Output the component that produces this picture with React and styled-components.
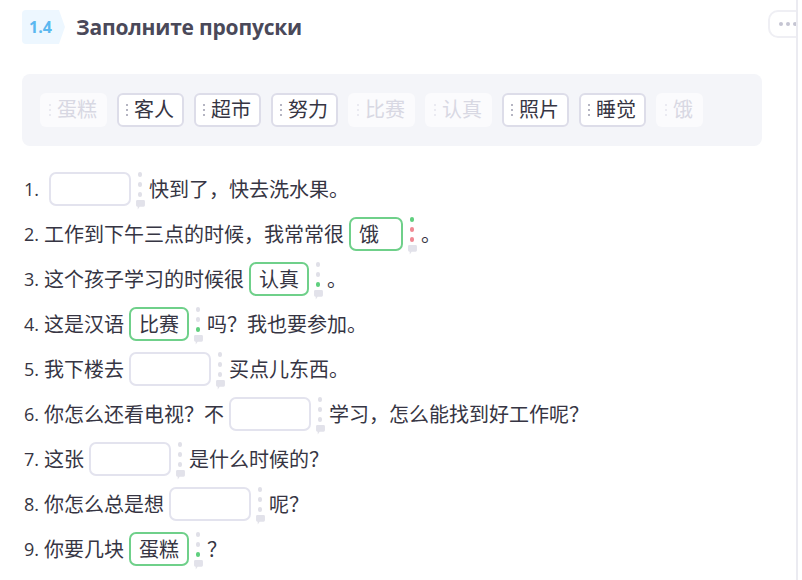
import React from "react";
import styled, { createGlobalStyle } from "styled-components";

const GlobalStyle = createGlobalStyle`
  html, body {
    margin: 0;
    padding: 0;
    background: #ffffff;
  }
  body {
    font-family: "Open Sans", "Noto Sans CJK SC", sans-serif;
    color: #363543;
  }
`;

const Page = styled.div`
  width: 802px;
  height: 580px;
  display: flex;
  overflow: hidden;
`;

const Main = styled.div`
  width: 798px;
  height: 100%;
  border-right: 2px solid #ebebf1;
  overflow: hidden;
  box-sizing: border-box;
  padding-left: 22px;
`;

const Header = styled.div`
  display: flex;
  align-items: center;
  height: 34px;
  margin-top: 10px;
`;

const Badge = styled.div`
  width: 43px;
  height: 34px;
  display: flex;
  align-items: center;
  padding-left: 7px;
  box-sizing: border-box;
  background: #edf7ff;
  color: #5ab8f0;
  font-size: 16px;
  font-weight: 700;
  border-radius: 4px 0 0 4px;
  clip-path: polygon(0 0, 86% 0, 100% 50%, 86% 100%, 0 100%);
`;

const Title = styled.h1`
  margin: 0 0 0 11px;
  font-size: 21px;
  font-weight: 700;
  color: #4a4959;
  letter-spacing: -0.2px;
  flex: 1;
`;

const MoreButton = styled.div`
  width: 40px;
  height: 28px;
  margin-right: -12px;
  margin-top: -6px;
  border: 2px solid #efeff4;
  border-radius: 10px;
  box-sizing: border-box;
  display: flex;
  align-items: center;
  gap: 3px;
  padding-left: 9px;
`;

const MoreDot = styled.span`
  width: 4px;
  height: 4px;
  border-radius: 50%;
  background: #c5c5d2;
`;

const WordBank = styled.div`
  width: 740px;
  margin-top: 30px;
  box-sizing: border-box;
  padding: 19px 18px;
  background: #f4f5f9;
  border-radius: 8px;
  display: flex;
  gap: 10px;
`;

const Chip = styled.div`
  height: 34px;
  box-sizing: border-box;
  display: flex;
  align-items: center;
  gap: 6px;
  padding: 0 8px 0 7px;
  border: 2px solid ${(p) => (p.$used ? "transparent" : "#dddde9")};
  border-radius: 6px;
  background: ${(p) => (p.$used ? "#fbfbfd" : "#ffffff")};
  color: ${(p) => (p.$used ? "#d8d8e3" : "#363543")};
  font-size: 20px;
  line-height: 1;
`;

const Grip = styled.span`
  display: flex;
  flex-direction: column;
  gap: 3px;

  i {
    width: 2px;
    height: 2px;
    border-radius: 1px;
    background: ${(p) => (p.$used ? "#e4e4ec" : "#9c9cae")};
  }
`;

const List = styled.div`
  margin-top: 20px;
  padding-left: 2px;
`;

const Row = styled.div`
  height: 45px;
  display: flex;
  align-items: center;
  font-size: 20px;
  white-space: nowrap;
`;

const Num = styled.span`
  font-size: 18px;
  margin-right: 5px;
`;

const Blank = styled.span`
  height: 34px;
  box-sizing: border-box;
  margin-left: 5px;
  display: inline-flex;
  align-items: center;
  padding: 0 8px;
  min-width: ${(p) => (p.$word ? "54px" : "82px")};
  border: 2px solid ${(p) => (p.$word ? "#6fd08a" : "#e3e3ee")};
  border-radius: 7px;
  font-size: 20px;
`;

const Marks = styled.span`
  display: flex;
  flex-direction: column;
  align-items: center;
  gap: 5px;
  margin: 4px 7px 0 7px;
  width: 4px;
`;

const Mark = styled.i`
  width: 4px;
  height: 5px;
  border-radius: 2px;
  background: ${(p) =>
    p.$state === "ok" ? "#5fcf7e" : p.$state === "bad" ? "#f08893" : "#e0e0e8"};
`;

const Bubble = () => (
  <svg width="9" height="10" viewBox="0 0 8 9" style={{ marginTop: -2 }}>
    <path
      d="M1.2 0h5.6A1.2 1.2 0 0 1 8 1.2v3.6A1.2 1.2 0 0 1 6.8 6H3.2L1.5 8.6V6h-.3A1.2 1.2 0 0 1 0 4.8V1.2A1.2 1.2 0 0 1 1.2 0z"
      fill="#e2e2ea"
    />
  </svg>
);

const words = [
  { w: "蛋糕", used: true },
  { w: "客人" },
  { w: "超市" },
  { w: "努力" },
  { w: "比赛", used: true },
  { w: "认真", used: true },
  { w: "照片" },
  { w: "睡觉" },
  { w: "饿", used: true },
];

const G = ["", "", ""];

const rows = [
  { before: "", word: null, after: "快到了，快去洗水果。", marks: G },
  { before: "工作到下午三点的时候，我常常很", word: "饿", after: "。", marks: ["ok", "bad", "bad"] },
  { before: "这个孩子学习的时候很", word: "认真", after: "。", marks: ["", "", "ok"] },
  { before: "这是汉语", word: "比赛", after: "吗？我也要参加。", marks: ["", "", "ok"] },
  { before: "我下楼去", word: null, after: "买点儿东西。", marks: G },
  { before: "你怎么还看电视？不", word: null, after: "学习，怎么能找到好工作呢？", marks: G },
  { before: "这张", word: null, after: "是什么时候的？", marks: G },
  { before: "你怎么总是想", word: null, after: "呢？", marks: G },
  { before: "你要几块", word: "蛋糕", after: "？", marks: ["", "", "ok"] },
];

export default function App() {
  return (
    <Page>
      <GlobalStyle />
      <Main>
        <Header>
          <Badge>1.4</Badge>
          <Title>Заполните пропуски</Title>
          <MoreButton>
            <MoreDot />
            <MoreDot />
            <MoreDot />
          </MoreButton>
        </Header>

        <WordBank>
          {words.map((c) => (
            <Chip key={c.w} $used={c.used}>
              <Grip $used={c.used}>
                <i />
                <i />
                <i />
              </Grip>
              {c.w}
            </Chip>
          ))}
        </WordBank>

        <List>
          {rows.map((r, i) => (
            <Row key={i}>
              <Num>{i + 1}.</Num>
              {r.before}
              <Blank $word={r.word}>{r.word}</Blank>
              <Marks>
                {r.marks.map((m, j) => (
                  <Mark key={j} $state={m} />
                ))}
                <Bubble />
              </Marks>
              {r.after}
            </Row>
          ))}
        </List>
      </Main>
    </Page>
  );
}
